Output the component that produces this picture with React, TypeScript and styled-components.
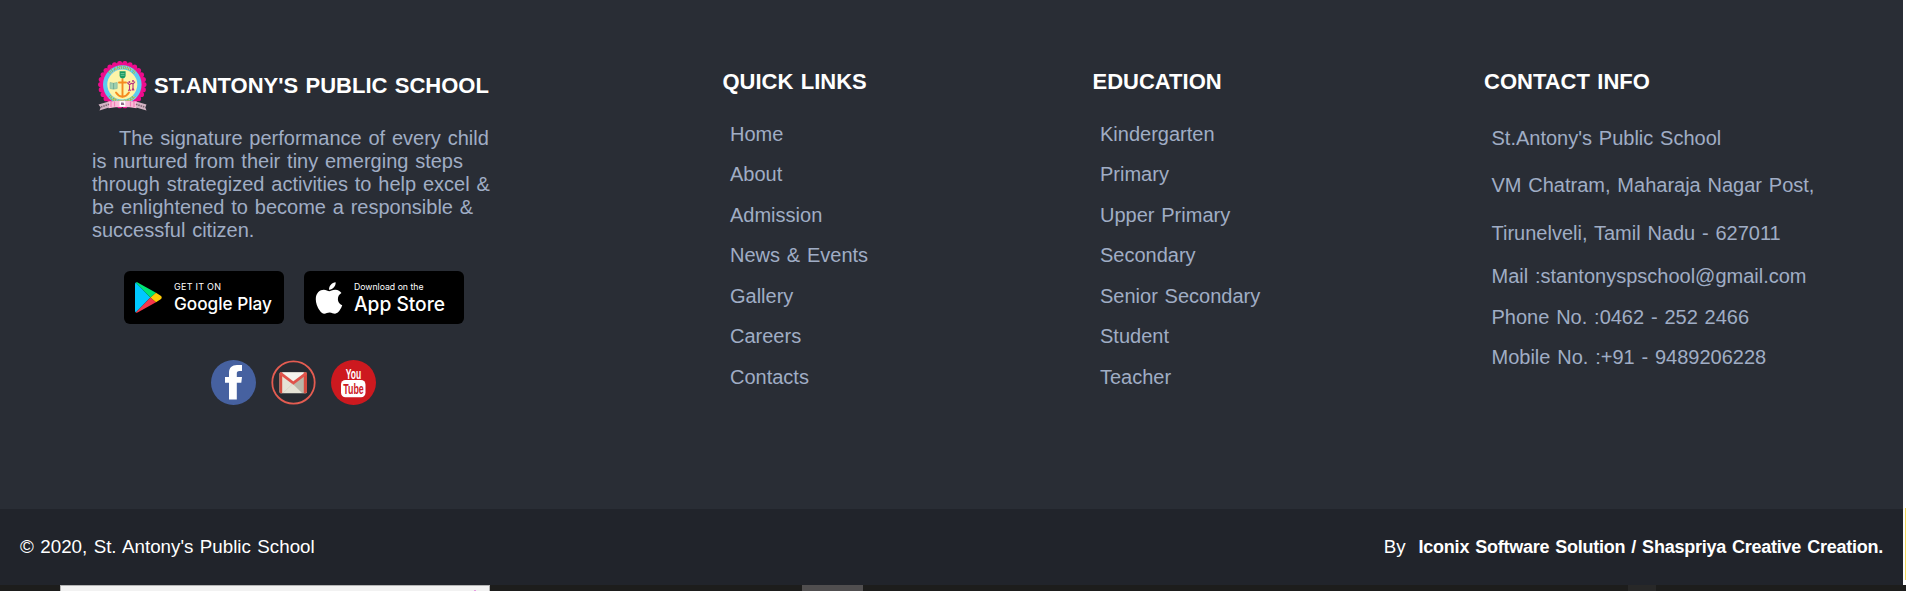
import React from "react";
import styled, { createGlobalStyle } from "styled-components";
import { FaApple } from "react-icons/fa";

const Global = createGlobalStyle`
  * { box-sizing: border-box; margin: 0; padding: 0; }
  body {
    margin: 0;
    background: #1d1d1d;
    font-family: "Liberation Sans", Arial, sans-serif;
    font-size: 20px;
    word-spacing: 1.25px;
    color: #a0adc5;
  }
`;

const Page = styled.div`
  height: 591px;
  overflow: hidden;
  display: flex;
  flex-direction: column;
`;
const Main = styled.div`
  height: 585px;
  display: flex;
`;
const Site = styled.div`
  flex: 1;
  min-width: 0;
`;
const Edge = styled.div`
  width: 3px;
  background: #fff;
  display: flex;
  justify-content: flex-end;
  align-items: flex-end;
  padding-bottom: 5px;
`;
const EdgeAccent = styled.div`
  width: 1px;
  height: 72px;
  background: #f3dc62;
`;
const Footer = styled.footer`
  height: 509px;
  background: #292d35;
  display: flex;
  align-items: flex-start;
`;
const Brand = styled.section`
  flex: none;
  width: 722.5px;
  padding: 60px 0 0 92px;
`;
const BrandRow = styled.div`
  display: flex;
  align-items: center;
  height: 52px;
  padding-left: 6px;
  gap: 7px;
`;
const Title = styled.h3`
  font-size: 22px;
  line-height: 26px;
  font-weight: 700;
  color: #fff;
  white-space: nowrap;
`;
const About = styled.p`
  line-height: 23px;
  margin-top: 15px;
  white-space: nowrap;
`;
const Line = styled.span`
  display: block;
  &:first-child { padding-left: 27px; }
`;
const Stores = styled.div`
  display: flex;
  gap: 20px;
  margin: 29px 0 0 32px;
`;
const Store = styled.a`
  width: 160px;
  height: 53px;
  background: #000;
  border-radius: 6px;
  display: flex;
  align-items: center;
  color: #fff;
`;
const StoreIcon = styled.span<{ $left: number }>`
  display: flex;
  width: ${(p) => 50 - p.$left}px;
  margin-left: ${(p) => p.$left}px;
`;
const StoreLabel = styled.svg`
  width: 110px;
  height: 53px;
  overflow: visible;
  fill: #fff;
  word-spacing: 0;
  font-family: Inter, "Liberation Sans", sans-serif;
`;
const Social = styled.div`
  display: flex;
  gap: 15px;
  margin: 36px 0 0 119px;
`;
const Column = styled.section<{ $width: number }>`
  width: ${(p) => p.$width}px;
  padding-top: 69px;
  flex: none;
`;
const List = styled.ul<{ $indent: number; $top?: number }>`
  list-style: none;
  padding: ${(p) => p.$top ?? 19}px 0 0 ${(p) => p.$indent}px;
`;
const Item = styled.li<{ $height: number }>`
  height: ${(p) => p.$height}px;
  display: flex;
  align-items: center;
  white-space: nowrap;
`;
const Bottom = styled.div`
  height: 76px;
  background: #21242b;
  color: #fff;
  display: flex;
  justify-content: space-between;
  align-items: center;
  padding: 0 20px;
  font-size: 18.75px;
`;
const Credit = styled.b`
  font-size: 18px;
  letter-spacing: -0.24px;
`;
const Under = styled.div`
  height: 6px;
  background: #1d1d1c;
  display: flex;
  padding-left: 60px;
`;
const Panel = styled.div`
  width: 430px;
  border: 1px solid #b5b5b5;
  border-bottom: 0;
  background: #f2f2f2;
  display: flex;
  align-items: flex-end;
  padding-left: 413px;
`;
const Dot = styled.div`
  width: 2px;
  height: 1px;
  background: #e79be2;
`;
const Thumb = styled.div<{ $width: number; $gap: number; $color: string }>`
  width: ${(p) => p.$width}px;
  margin-left: ${(p) => p.$gap}px;
  background: ${(p) => p.$color};
`;

const scallops = Array.from({ length: 26 }, (_, i) => {
  const a = (i / 26) * Math.PI * 2;
  return { x: 24.3 + Math.cos(a) * 21.6, y: 23.6 + Math.sin(a) * 21.2 };
});

const Crest = () => (
  <svg width="49" height="50" viewBox="0 0 49 50">
    <g fill="#ee0c8d">
      {scallops.map((s, i) => <circle key={i} cx={s.x} cy={s.y} r="2.6" />)}
      <circle cx="24.3" cy="23.6" r="21.8" />
    </g>
    <circle cx="24.3" cy="23.6" r="19.3" fill="#5ccbf0" />
    <circle cx="24.3" cy="23.6" r="15" fill="#fdf4a8" />
    <path id="ringTop" d="M8.6 23.6a15.7 15.7 0 0 1 31.4 0" fill="none" />
    <path id="ringLow" d="M6.2 24a18.1 18.1 0 0 0 36.2 0" fill="none" />
    <g fill="#c3bd2a" fontSize="4.5" fontWeight="700" style={{ wordSpacing: 0 }}>
      <text><textPath href="#ringTop" startOffset="11" textLength="27">ST.ANTONY'S</textPath></text>
      <text><textPath href="#ringLow" startOffset="13" textLength="31">PUBLIC SCHOOL</textPath></text>
    </g>
    <path d="M21.6 10.3h6v4.4c0 1.5-1.5 2.5-3 3-1.5-.5-3-1.5-3-3z" fill="#169b62" />
    <path d="M22.7 12.5h3.8M22.7 14.3h3.8" stroke="#9bd8b5" strokeWidth=".6" />
    <g fill="none" stroke="#f58a1f" strokeWidth="1.9" strokeLinecap="round">
      <path d="M24.5 18.5v17M21 21.5h7" />
      <path d="M18 31.5c1.5 2.5 3.5 3.8 6.5 4.3 3-.5 5-1.8 6.5-4.3" />
    </g>
    <path d="M12 21.5l3.5.7 3.7-.7v6l-3.7.7-3.5-.7z" fill="#9fd0b0" stroke="#7fb59b" strokeWidth=".6" />
    <path d="M15.6 22v6" stroke="#5d9c86" strokeWidth=".7" />
    <path
      d="M31.5 23.5v5M29.3 21.5l2.2 2.3 2-1.5M30.5 30l1-2 1 2M35 22.5v5M33.5 22l1.5 1 2-2.3M34 29.5l1-2.5 1 2.5"
      stroke="#b5307e" strokeWidth="1.1" fill="none"
    />
    <g fill="#b5307e"><circle cx="31.4" cy="21" r="1" /><circle cx="35" cy="20" r="1" /></g>
    <path d="M.5 43.5l12-3.5v6L1.5 49.5l1.2-3z" fill="#d3b3c3" />
    <path d="M48.5 43.5l-12-3.5v6l12 3.5-1.2-3z" fill="#d3b3c3" />
    <path d="M10.5 40.8c9-1.5 19-1.5 28 0v6.4c-9-1.5-19-1.5-28 0z" fill="#f9bcd8" />
    <path d="M13 41v5M16.5 40.5v5M32.5 40.5v5M36 41v5" stroke="#f07fb8" strokeWidth="1.2" />
    <path d="M21.5 40.2h5.8v5.5h-5.8z" fill="#fff" />
    <path d="M23 41.5h2.5l.8 2.5H23z" fill="#8e6b8b" />
    <path d="M3 46l8-2.7M38 43.3l8.5 2.7" stroke="#7d6573" strokeWidth="1.7" strokeDasharray="1.5 .9" />
  </svg>
);

const PlayIcon = () => (
  <svg width="28" height="31" viewBox="0 0 28 31">
    <path d="M.8.6C.3 1 0 1.5 0 2.2v26.6c0 .7.3 1.2.8 1.6L15.5 15.5z" fill="#00c8ff" />
    <path d="M.8.6C1.4.2 2.2.2 3 .7l18 10.1-5.5 4.7z" fill="#00e676" />
    <path d="M.8 30.4c.6.4 1.4.4 2.2-.1l18-10.1-5.5-4.7z" fill="#f5364a" />
    <path d="M21 10.8l4.7 2.9c1.4.8 1.4 2.7 0 3.5L21 20.2l-5.5-4.7z" fill="#ffcb05" />
  </svg>
);

const FacebookIcon = () => (
  <svg width="45" height="45" viewBox="0 0 45 45">
    <circle cx="22.5" cy="22.5" r="22.5" fill="#4661a0" />
    <path d="M31 5v6h-2.5c-2.2 0-2.7 1-2.7 2.6V17h5.2l-.7 5.8h-4.5v16.700H18v-16.700h-4V17h4v-4.300C18 7.800 21 5 26 5z" fill="#fff" />
  </svg>
);

const MailIcon = () => (
  <svg width="45" height="45" viewBox="0 0 45 45">
    <circle cx="22.5" cy="22.5" r="21.2" fill="#272b31" stroke="#e45c51" strokeWidth="1.8" />
    <rect x="8.5" y="12.2" width="27.5" height="21" rx="1.5" fill="#e5e3d5" />
    <path d="M22.3 24.5L34 14v19H31z" fill="#b9b7a8" />
    <path d="M11 12.5h23L22.3 21z" fill="#f5f4ee" />
    <path d="M8.5 13.7c0-1 .6-1.5 1.5-1.5h1.2v21H10c-.9 0-1.5-.6-1.5-1.5zM36 13.7c0-1-.6-1.5-1.5-1.5h-1.7v21h1.7c.9 0 1.5-.6 1.5-1.5z" fill="#d54c3f" />
    <path d="M9.5 13.3l12.8 9.7 12.8-9.7" fill="none" stroke="#e0524a" strokeWidth="2.7" />
    <path d="M12 33l9.5-9" stroke="#d2cfc0" strokeWidth=".6" />
  </svg>
);

const YoutubeIcon = () => (
  <svg width="45" height="45" viewBox="0 0 45 45">
    <circle cx="22.5" cy="22.5" r="22.5" fill="#cd191f" />
    <rect x="10" y="20" width="24.5" height="17.2" rx="4.5" fill="#fff" />
    <g fontWeight="700" fontFamily="Liberation Sans Narrow, Liberation Sans, Arial, sans-serif">
      <text x="14.7" y="18.6" fontSize="15" fill="#fff" textLength="15.5" lengthAdjust="spacingAndGlyphs">You</text>
      <text x="12.3" y="34" fontSize="14.5" fill="#cd191f" textLength="20.5" lengthAdjust="spacingAndGlyphs">Tube</text>
    </g>
  </svg>
);

const about = [
  "The signature performance of every child",
  "is nurtured from their tiny emerging steps",
  "through strategized activities to help excel &",
  "be enlightened to become a responsible &",
  "successful citizen.",
];
const quickLinks = ["Home", "About", "Admission", "News & Events", "Gallery", "Careers", "Contacts"];
const education = ["Kindergarten", "Primary", "Upper Primary", "Secondary", "Senior Secondary", "Student", "Teacher"];
const address = [
  { text: "St.Antony's Public School", height: 47 },
  { text: "VM Chatram, Maharaja Nagar Post,", height: 47.5 },
  { text: "Tirunelveli, Tamil Nadu - 627011", height: 47 },
];
const contact = ["Mail :stantonyspschool@gmail.com", "Phone No. :0462 - 252 2466", "Mobile No. :+91 - 9489206228"];

export default function App() {
  return (
    <Page>
      <Global />
      <Main>
        <Site>
          <Footer>
            <Brand>
              <BrandRow>
                <Crest />
                <Title>ST.ANTONY'S PUBLIC SCHOOL</Title>
              </BrandRow>
              <About>{about.map((t) => <Line key={t}>{t}</Line>)}</About>
              <Stores>
                <Store>
                  <StoreIcon $left={11}><PlayIcon /></StoreIcon>
                  <StoreLabel viewBox="0 0 110 53">
                    <text x="0" y="18.8" fontSize="9" textLength="47">GET IT ON</text>
                    <text x="0" y="39.3" fontSize="17.5" fontWeight="500" textLength="98" lengthAdjust="spacingAndGlyphs">Google Play</text>
                  </StoreLabel>
                </Store>
                <Store>
                  <StoreIcon $left={6.5}><FaApple size={36} /></StoreIcon>
                  <StoreLabel viewBox="0 0 110 53">
                    <text x="0" y="18.6" fontSize="9" textLength="69.5" lengthAdjust="spacingAndGlyphs">Download on the</text>
                    <text x="0" y="39.5" fontSize="19.5" fontWeight="500" textLength="91" lengthAdjust="spacingAndGlyphs">App Store</text>
                  </StoreLabel>
                </Store>
              </Stores>
              <Social>
                <FacebookIcon />
                <MailIcon />
                <YoutubeIcon />
              </Social>
            </Brand>
            <Column $width={370}>
              <Title>QUICK LINKS</Title>
              <List $indent={7.5}>{quickLinks.map((t) => <Item key={t} $height={40.5}>{t}</Item>)}</List>
            </Column>
            <Column $width={391.5}>
              <Title>EDUCATION</Title>
              <List $indent={7.5}>{education.map((t) => <Item key={t} $height={40.5}>{t}</Item>)}</List>
            </Column>
            <Column $width={400}>
              <Title>CONTACT INFO</Title>
              <List $indent={7.5} $top={20}>
                {address.map((a) => <Item key={a.text} $height={a.height}>{a.text}</Item>)}
                {contact.map((t) => <Item key={t} $height={40.5}>{t}</Item>)}
              </List>
            </Column>
          </Footer>
          <Bottom>
            <span>© 2020, St. Antony's Public School</span>
            <span>By&nbsp; <Credit>Iconix Software Solution / Shaspriya Creative Creation.</Credit></span>
          </Bottom>
        </Site>
        <Edge><EdgeAccent /></Edge>
      </Main>
      <Under>
        <Panel><Dot /></Panel>
        <Thumb $width={61} $gap={312} $color="#504e4f" />
        <Thumb $width={28} $gap={765} $color="#282828" />
      </Under>
    </Page>
  );
}
